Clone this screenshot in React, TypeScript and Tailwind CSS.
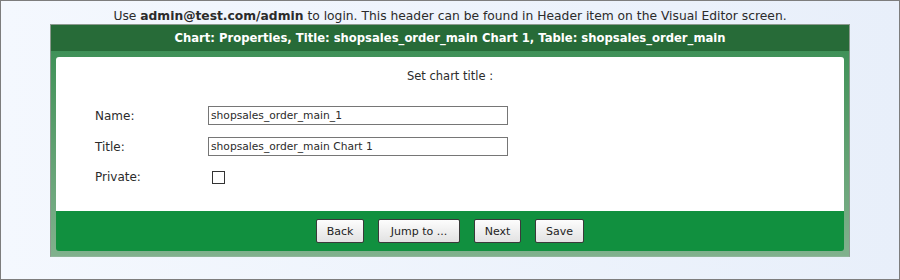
import React, { useState } from 'react';

const App: React.FC = () => {
  const [name, setName] = useState('shopsales_order_main_1');
  const [title, setTitle] = useState('shopsales_order_main Chart 1');
  const [isPrivate, setIsPrivate] = useState(false);

  const btn =
    'h-[24px] rounded-[2px] border border-[#3a3a3a] bg-gradient-to-b from-[#fdfdfd] to-[#e2e2e2] text-[11px] text-[#222] leading-none';
  const field =
    'h-[19px] w-[300px] border border-[#767676] px-[2px] text-[10.7px] text-[#2b2b2b] outline-none';

  return (
    <div className="w-[900px] h-[280px] overflow-hidden border border-[#7d7d7d] bg-gradient-to-r from-[#f4f8fe] to-[#e8effa] font-['DejaVu_Sans',Verdana,sans-serif] text-[#2b2b2b]">
      <p className="pt-[7px] h-[23px] text-center text-[12.3px] leading-[16px]">
        Use <b>admin@test.com/admin</b> to login. This header can be found in Header item on the Visual Editor screen.
      </p>

      <div className="ml-[49px] w-[800px] border border-[#8c9a8f] border-b-[#8fb59a]">
        <div className="h-[26px] bg-[#276b38] text-center text-[11.6px] font-bold leading-[26px] text-white">
          Chart: Properties, Title: shopsales_order_main Chart 1, Table: shopsales_order_main
        </div>

        <div className="bg-gradient-to-b from-[#3f9158] to-[#80b18d] px-[5px] pt-[6px] pb-[5px]">
          <div className="h-[154px] rounded-t-[3px] bg-white pt-[12px]">
            <div className="text-center text-[11.5px] leading-[14px]">Set chart title :</div>

            <div className="mt-[23px] grid grid-cols-[113px_1fr] items-center gap-y-[12px] pl-[39px] text-[12px]">
              <label>Name:</label>
              <input value={name} onChange={(e) => setName(e.target.value)} className={field} />
              <label>Title:</label>
              <input value={title} onChange={(e) => setTitle(e.target.value)} className={field} />
              <label>Private:</label>
              <div className="pl-[4px]">
                <button
                  onClick={() => setIsPrivate(!isPrivate)}
                  className="block h-[13px] w-[13px] border border-[#333] bg-white text-[10px] leading-[11px]"
                >
                  {isPrivate ? '✓' : ''}
                </button>
              </div>
            </div>
          </div>

          <div className="flex h-[40px] items-center justify-center gap-[14px] rounded-b-[3px] bg-[#11903f]">
            <button className={btn + ' w-[48px]'}>Back</button>
            <button className={btn + ' w-[82px]'}>Jump to ...</button>
            <button className={btn + ' w-[47px]'}>Next</button>
            <button className={btn + ' w-[49px]'}>Save</button>
          </div>
        </div>
      </div>
    </div>
  );
};

export default App;
